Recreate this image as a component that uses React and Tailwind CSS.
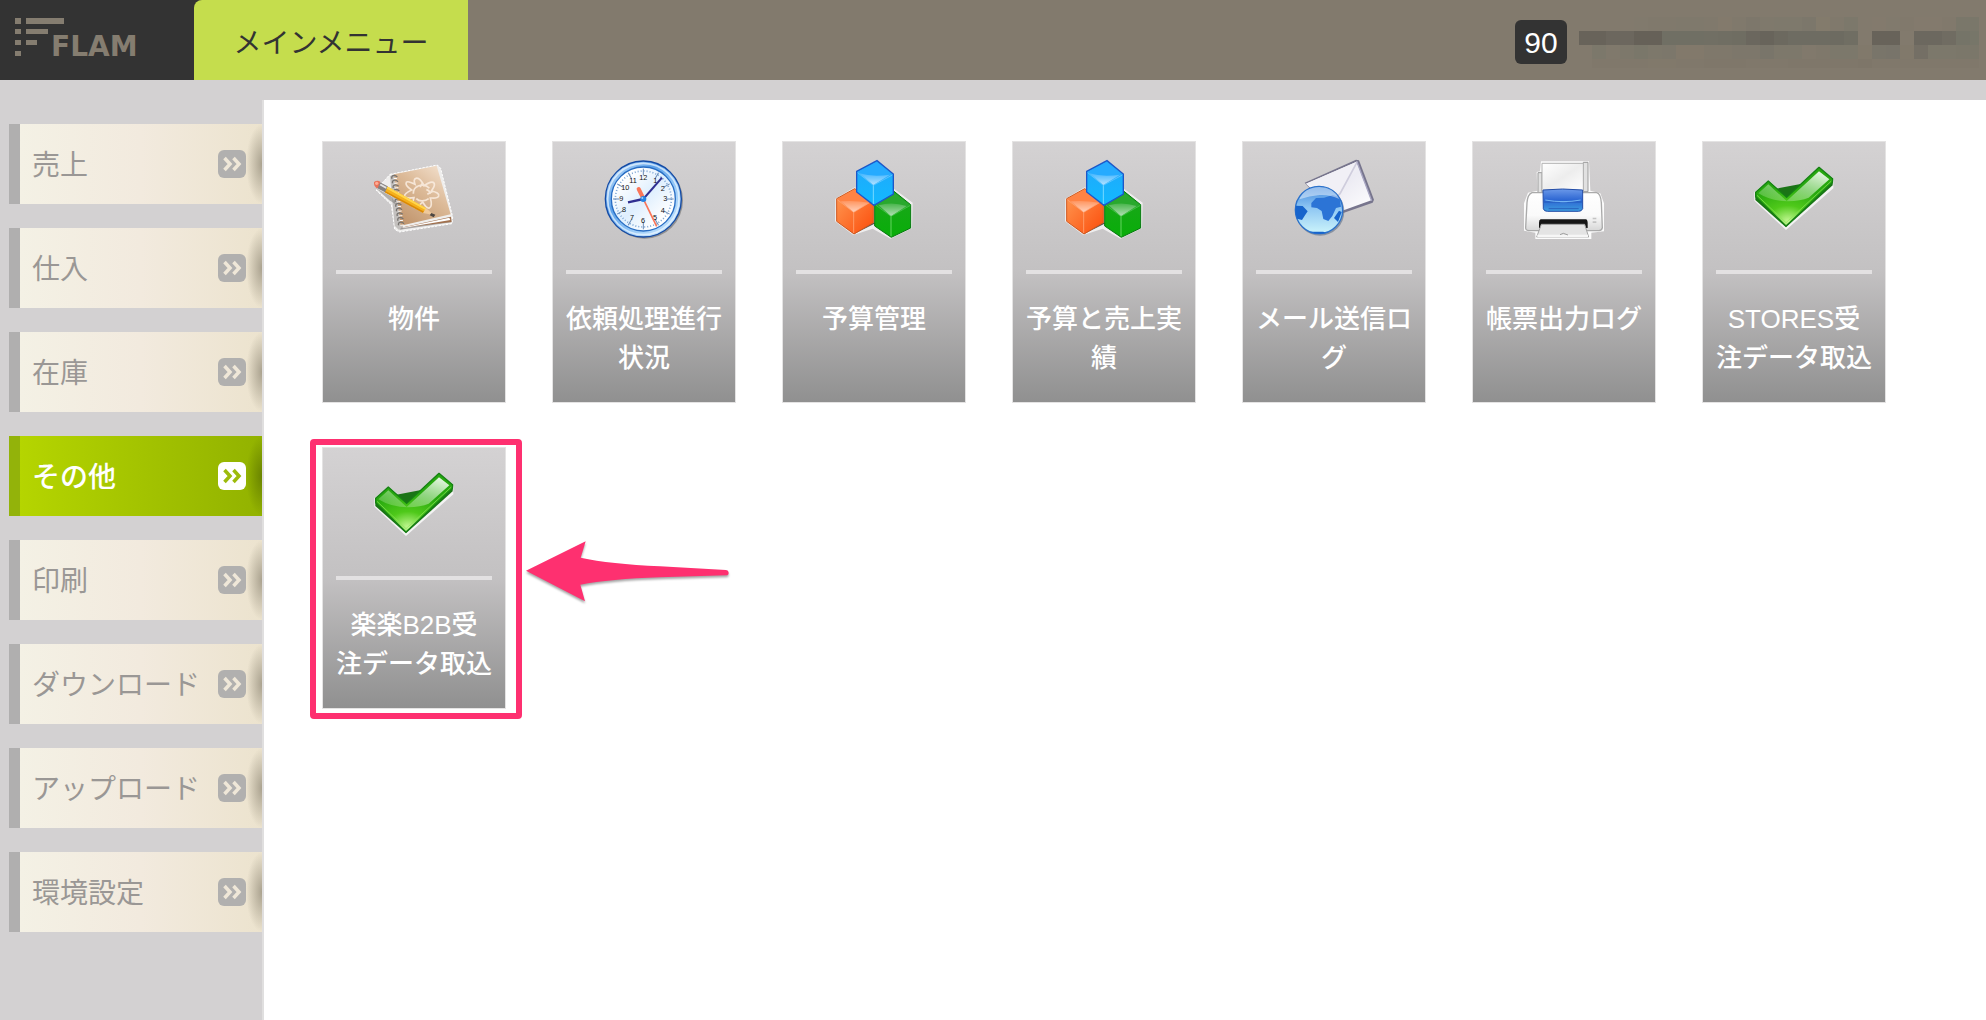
import { useState } from 'react';

const menuItems = ['売上', '仕入', '在庫', 'その他', '印刷', 'ダウンロード', 'アップロード', '環境設定'];

const nameRows = [
  { y: 1, h: 14, cells: ['#827a6d', '#827a6d', '#827a6d', '#827a6d', '#817a6d', '#80796c', '#80796c', '#7f796c', '#7f796c', '#80796c', '#837a6c', '#80796c', '#7d776b', '#7f796c', '#7e796c', '#7e796c', '#7c776b', '#837b6c', '#80796c', '#7c786b', '#827a6d', '#837a6d', '#817a6d', '#81796c', '#837a6d', '#837a6d', '#81796c', '#7a776a', '#7a776a'] },
  { y: 15, h: 14, cells: ['#68635a', '#68635a', '#6c675e', '#6c675e', '#666158', '#666158', '#706f64', '#706f64', '#706f64', '#716f64', '#706e63', '#6f6d62', '#6b675e', '#68645b', '#6c695f', '#6e6c62', '#6e6c62', '#6e6c62', '#6d6b61', '#706e63', '#827a6d', '#68635a', '#68635a', '#827a6d', '#6c685f', '#6c685f', '#706c62', '#757468', '#777669'] },
  { y: 29, h: 14, cells: ['#827a6d', '#7c786b', '#80796c', '#7d786b', '#7a776a', '#7d786b', '#7c776b', '#82796b', '#82796b', '#7f786b', '#7f786b', '#7d776b', '#7d776b', '#79756a', '#7d786b', '#7d786b', '#81796c', '#7f786b', '#7c786b', '#7c786b', '#81796b', '#79756a', '#78746a', '#81796b', '#746f65', '#7c786b', '#7c786b', '#7b776a', '#7b776a'] },
  { y: 43, h: 9, cells: ['#827a6d', '#80786b', '#80786b', '#80786b', '#80786b', '#81796b', '#81796b', '#80786b', '#80786b', '#7f776a', '#7f776a', '#7f776a', '#80786b', '#80786b', '#80786b', '#7f776a', '#7f776a', '#7f776a', '#7f776a', '#7f776a', '#7e7669', '#80786b', '#80786b', '#80786b', '#80786b', '#80786b', '#80786b', '#80786b', '#80786b'] },
];

function Logo() {
  return (
    <svg width="164" height="52" viewBox="0 0 164 52" fill="#857d70" role="img" aria-label="FLAM">
      <path d="M15 4h6v6h-6zM15 15h6v5h-6zM15 26h6v5h-6zM15 37h6v5h-6zM26 4h38v6H26zM26 15h22v5H26zM26 26h11v5H26z" />
      <text x="51" y="42" fontFamily="DejaVu Sans" fontSize="28" fontWeight="bold">FLAM</text>
    </svg>
  );
}

function UserName() {
  return (
    <svg width="400" height="52" viewBox="0 0 400 52" shapeRendering="crispEdges" aria-hidden="true">
      {nameRows.map((row) =>
        row.cells.map((color, i) => (
          <rect key={`${row.y}-${i}`} x={i * 14 - 1} y={row.y} width="14" height={row.h} fill={color} />
        ))
      )}
    </svg>
  );
}

function ArrowBadge({ active }) {
  return (
    <svg width="28" height="28" viewBox="0 0 28 28" className="relative" aria-hidden="true">
      <rect width="28" height="28" rx="6" fill={active ? '#ffffff' : '#b1b0af'} />
      <path
        d="M6.500 8l5.500 6-5.500 6M15.500 8l5.500 6-5.500 6"
        fill="none"
        stroke={active ? '#9dbb0c' : '#efe7d8'}
        strokeWidth="3.500"
      />
    </svg>
  );
}

function NotebookIcon() {
  const rings = [0, 1, 2, 3, 4, 5, 6, 7, 8, 9, 10];
  return (
    <svg width="80" height="80" viewBox="192 86 240 240" aria-hidden="true">
      <defs>
        <linearGradient id="cover" x1="1" y1="0" x2="0.3" y2="1">
          <stop offset="0" stopColor="#f6e6d6" />
          <stop offset="0.5" stopColor="#dcba98" />
          <stop offset="1" stopColor="#c2976f" />
        </linearGradient>
      </defs>
      <path d="M240 132l142-28 10 10 36 146-2 20-158 25-14-8-10-74-46-44z" fill="#efeeed" stroke="#fff" strokeWidth="3" strokeDasharray="7 4" />
      <path d="M240 138l14-6 26 164-14 2-12-12z" fill="#c3c0be" />
      <path d="M270 298l154-22-1-10-150 26z" fill="#8f8986" opacity="0.7" />
      <path d="M273 292l152-17-2-16z" fill="#a2714e" />
      <path d="M276 292l142-30 3 7-142 24z" fill="#fff" />
      <path d="M252 132l128-26 42 146-150 34z" fill="url(#cover)" />
      <g fill="none" stroke="#fbeee2" strokeWidth="5" opacity="0.85">
        <path d="M318 144c10-3 18 10 24 22 14-10 26-14 30-8 5 8-3 16-8 24 16 3 24 8 22 15-3 8-14 6-25 6 4 14 4 27-3 30-8 3-14-8-20-18-10 10-20 20-27 15-8-6-1-18 1-28-14 2-26 3-28-4-2-8 10-14 21-19-12-8-20-16-16-23 4-6 15 0 26 6-3-9-4-16 3-18z" />
        <path d="M316 172c16-13 35-8 42 2M310 190c0-14 8-20 14-22M356 205c-10 8-28 10-37 0M349 178c7 2 11 8 11 12" />
        <path d="M330 170l8-12M370 182l-18 10" />
      </g>
      {rings.map((i) => (
        <g key={i} fill="none" stroke="#77736f" strokeWidth="4">
          <path d={`M${262 + i * 2} ${140 + i * 14}c-8-8-20-4-16 5`} />
          <path d={`M${261 + i * 2} ${144 + i * 14}l-10 1`} stroke="#fff" strokeWidth="3" />
        </g>
      ))}
      <path d="M196 172l42 38 22 14-16-26z" fill="#7d7b79" opacity="0.55" />
      <path d="M231 168l118 66-9 14-116-62z" fill="#f5b01c" />
      <path d="M231 168l118 66-3 5-118-65z" fill="#ffd54c" />
      <path d="M226 182l117 62-3 4-116-62z" fill="#d98808" />
      <path d="M348 233l23 21-32-6z" fill="#efc99b" />
      <path d="M364 248l12 5-5 8-12-6z" fill="#4b4643" />
      <path d="M208 155l25 13-8 18-26-14z" fill="#85817f" />
      <path d="M212 160l18 10-2 5-19-10z" fill="#e3e2e1" />
      <path d="M192 155q10-7 19-1l-8 20q-12-4-11-19z" fill="#e9735a" />
      <circle cx="200" cy="159" r="5" fill="#ffab93" />
    </svg>
  );
}

const clockNumbers = [
  ['12', 310, 148], ['1', 346, 158], ['2', 368, 181], ['3', 376, 213], ['4', 368, 248], ['5', 345, 270],
  ['6', 309, 277], ['7', 276, 268], ['8', 252, 244], ['9', 244, 213], ['10', 256, 179], ['11', 279, 157],
];

function ClockIcon() {
  const ticks = [0, 30, 60, 90, 120, 150, 180, 210, 240, 270, 300, 330];
  return (
    <svg width="80" height="80" viewBox="192 86 240 240" aria-hidden="true">
      <defs>
        <linearGradient id="rim" x1="0" y1="0" x2="1" y2="1">
          <stop offset="0" stopColor="#ddf0ff" />
          <stop offset="0.35" stopColor="#5aa0ea" />
          <stop offset="0.65" stopColor="#9cccf8" />
          <stop offset="1" stopColor="#d5edff" />
        </linearGradient>
        <linearGradient id="face" x1="0" y1="0" x2="1" y2="1">
          <stop offset="0.2" stopColor="#fff" />
          <stop offset="0.5" stopColor="#dfeffe" />
          <stop offset="0.8" stopColor="#fff" />
        </linearGradient>
      </defs>
      <circle cx="314" cy="210" r="115" fill="#777" opacity="0.7" />
      <circle cx="310" cy="206" r="114" fill="url(#rim)" stroke="#144ba6" strokeWidth="4" />
      <circle cx="310" cy="206" r="107" fill="none" stroke="#eff8ff" strokeWidth="5" opacity="0.7" />
      <circle cx="310" cy="206" r="96" fill="url(#face)" stroke="#286dc3" strokeWidth="4" />
      <circle cx="310" cy="206" r="84" fill="none" stroke="#7ea6d4" strokeWidth="5" strokeDasharray="3 6" />
      {ticks.map((deg) => (
        <path key={deg} d="M310 115v20" stroke="#6a8bb5" strokeWidth="3" transform={`rotate(${deg} 310 206)`} />
      ))}
      {clockNumbers.map(([label, x, y]) => (
        <text key={label} x={x} y={y} textAnchor="middle" fontFamily="Liberation Sans" fontSize="22" fill="#111">
          {label}
        </text>
      ))}
      <path d="M296 176l14 28" stroke="#fa7659" strokeWidth="12" strokeLinecap="round" />
      <path d="M308 202l42 86" stroke="#fa7659" strokeWidth="5" />
      <path d="M310 206l56-64" stroke="#302f91" strokeWidth="6" />
      <path d="M310 206l-46 10" stroke="#302f91" strokeWidth="7" />
      <circle cx="310" cy="206" r="9" fill="#2583e2" />
      <circle cx="307" cy="203" r="3" fill="#9ed0ff" />
    </svg>
  );
}

function CubesIcon() {
  return (
    <svg width="80" height="80" viewBox="72 57 240 240" aria-hidden="true">
      <defs>
        <linearGradient id="orange" x1="0" y1="0" x2="1" y2="1">
          <stop offset="0" stopColor="#ff9c55" />
          <stop offset="1" stopColor="#fb4c0b" />
        </linearGradient>
        <linearGradient id="green" x1="0" y1="0" x2="0" y2="1">
          <stop offset="0" stopColor="#1da51d" />
          <stop offset="1" stopColor="#08ae08" />
        </linearGradient>
        <linearGradient id="blue" x1="0" y1="0" x2="0" y2="1">
          <stop offset="0" stopColor="#22a7fa" />
          <stop offset="1" stopColor="#12b9ff" />
        </linearGradient>
        <linearGradient id="shine" x1="0" y1="0" x2="0" y2="1">
          <stop offset="0" stopColor="#fff" stopOpacity="0.15" />
          <stop offset="1" stopColor="#fff" stopOpacity="0.65" />
        </linearGradient>
      </defs>
      <path d="M76 176l58-34 58 32 60-28 56 42-2 76-64 32-54-30-58 19-55-41z" fill="#efeeee" />
      <path d="M84 244l48 38 60-30 50 40 60-30v-10z" fill="#55504d" />
      <path d="M80 176l54-30 56 34v68l-58 34-52-38z" fill="url(#orange)" stroke="#cf5820" strokeWidth="3" />
      <path d="M82 178l51-29 54 32-56 36z" fill="#ff8344" />
      <path d="M92 184q40-4 86 4l-47 29z" fill="url(#shine)" />
      <path d="M131 217v62" stroke="#ff9a67" strokeWidth="3" />
      <path d="M131 217l57-35M131 217l-49-38" stroke="#ffab7e" strokeWidth="2" />
      <path d="M194 192l58-38 50 40v70l-58 28-50-34z" fill="url(#green)" stroke="#087a11" strokeWidth="3" />
      <path d="M197 193l54-36 49 38-57 34z" fill="#29a92d" />
      <path d="M206 196q40-12 84 2l-47 31z" fill="url(#shine)" />
      <path d="M243 229v60" stroke="#63d45f" strokeWidth="3" />
      <path d="M243 229l58-33M243 229l-46-34" stroke="#58c95b" strokeWidth="2" />
      <path d="M140 94l61-32 49 40v60l-58 34-52-40z" fill="url(#blue)" stroke="#1d57c9" strokeWidth="4" />
      <path d="M143 96l57-30 47 38-57 31z" fill="#26abff" />
      <path d="M148 100q40 12 92 4l-50 31z" fill="url(#shine)" />
      <path d="M190 136v56" stroke="#76d9ff" strokeWidth="3" />
      <path d="M190 136l57-31M190 136l-47-38" stroke="#74ccff" strokeWidth="2" />
    </svg>
  );
}

function MailIcon() {
  return (
    <svg width="80" height="80" viewBox="72 57 240 240" aria-hidden="true">
      <defs>
        <linearGradient id="paper" x1="0" y1="0" x2="1" y2="1">
          <stop offset="0" stopColor="#fff" />
          <stop offset="0.5" stopColor="#ecebf3" />
          <stop offset="1" stopColor="#fff" />
        </linearGradient>
        <linearGradient id="sea" x1="0" y1="0" x2="0" y2="1">
          <stop offset="0" stopColor="#3f86dc" />
          <stop offset="0.45" stopColor="#8ec6f3" />
          <stop offset="1" stopColor="#cdf5fb" />
        </linearGradient>
      </defs>
      <path d="M104 128l154-69 9 2 45 118-4 9-114 40z" fill="#77758d" />
      <path d="M108 131l152-66 44 116-106 38z" fill="url(#paper)" />
      <path d="M108 131l152-66-50 96z" fill="#f1f0f6" />
      <path d="M262 65l-52 96-12 12" fill="none" stroke="#cfcddd" strokeWidth="5" />
      <path d="M261 66l44 116" stroke="#a9a7c3" strokeWidth="4" />
      <circle cx="150" cy="214" r="73" fill="#66758c" opacity="0.65" />
      <circle cx="147" cy="210" r="71" fill="url(#sea)" stroke="#2c72cb" strokeWidth="4" />
      <path d="M124 189l14-15 24-1 26-8 20 6 5 29-15 4-11 24-12 15-15-6-5-24-14-9-17-2z" fill="#2c74d6" />
      <path d="M78 197l20 1 15 16-8 12-9 14-15-4q-8-20-3-39zM192 234l15-22 8 4-11 30zM120 275l40 0 8 4q-24 6-48-4z" fill="#1764cc" />
      <path d="M88 178q15-36 60-37 43 1 60 36-30-14-59-12-30 2-61 13z" fill="#fff" opacity="0.45" />
    </svg>
  );
}

function PrinterIcon() {
  return (
    <svg width="80" height="80" viewBox="72 57 240 240" aria-hidden="true">
      <defs>
        <linearGradient id="body" x1="0" y1="0" x2="0" y2="1">
          <stop offset="0" stopColor="#fff" />
          <stop offset="0.6" stopColor="#fafafa" />
          <stop offset="1" stopColor="#d7d7d7" />
        </linearGradient>
        <linearGradient id="window" x1="0" y1="0" x2="0" y2="1">
          <stop offset="0" stopColor="#6b99e9" />
          <stop offset="0.5" stopColor="#2c66d2" />
          <stop offset="1" stopColor="#3f9ddf" />
        </linearGradient>
        <linearGradient id="sheet" x1="0" y1="0" x2="1" y2="1">
          <stop offset="0" stopColor="#fff" />
          <stop offset="0.5" stopColor="#ededed" />
          <stop offset="1" stopColor="#fff" />
        </linearGradient>
      </defs>
      <path d="M110 96l10-2 3-30h144l4 88 30 8 11 30v84l-38 4v20H106v-20l-34-6v-82l12-32 28-6z" fill="#fbfbfb" />
      <path d="M114 98h12v60h-12zM250 67h14v88h-14z" fill="#e1e1e1" stroke="#9b9b9b" strokeWidth="3" />
      <path d="M126 70h124v84H126z" fill="url(#sheet)" stroke="#b2b2b2" strokeWidth="3" />
      <path d="M96 158h194q12 3 14 30l3 75q-1 8-10 9H86q-10-1-9-10l4-74q2-25 15-30z" fill="url(#body)" stroke="#aaa" strokeWidth="4" />
      <path d="M129 150q58-6 119 0v56q-3 8-12 8h-94q-10 0-12-8z" fill="url(#window)" stroke="#244da6" strokeWidth="3" />
      <path d="M132 186h114M146 206h90" stroke="#1f4fb0" strokeWidth="3" opacity="0.7" />
      <path d="M136 180q54 10 106 0M180 185h22" fill="none" stroke="#75b6f3" strokeWidth="3" />
      <path d="M122 238h136q6 2 5 17v9H117v-16q0-9 5-10z" fill="#161616" />
      <path d="M124 253h130l12 38H110z" fill="#e4e4e4" stroke="#a5a5a5" strokeWidth="3" />
      <path d="M112 284h152v8H112z" fill="#f6f6f6" />
      <path d="M180 284l10-4 14 5" fill="none" stroke="#9e9e9e" strokeWidth="3" />
      <path d="M278 233h11v5h-11zM278 244h11v5h-11z" fill="#c4c4c4" />
    </svg>
  );
}

function CheckIcon() {
  return (
    <svg width="80" height="80" viewBox="162 87 240 240" aria-hidden="true">
      <defs>
        <radialGradient id="leaf" cx="0.42" cy="0.92" r="0.6">
          <stop offset="0" stopColor="#c4f894" />
          <stop offset="0.45" stopColor="#4fc91a" />
          <stop offset="1" stopColor="#27a80f" />
        </radialGradient>
        <linearGradient id="gloss" x1="1" y1="0" x2="0.2" y2="1">
          <stop offset="0" stopColor="#fff" stopOpacity="0.95" />
          <stop offset="1" stopColor="#b2e8a0" stopOpacity="0.3" />
        </linearGradient>
      </defs>
      <path d="M163 186l43-35 54 46 96-86 44 34v30L258 300 163 212z" fill="#f3f3f3" />
      <path d="M166 188v22l92 82 140-126v-22z" fill="#1b7416" />
      <path d="M167 187l38-34 55 49 97-90 41 34-1 12-139 130-91-88z" fill="url(#leaf)" stroke="#168014" strokeWidth="4" strokeLinejoin="round" />
      <path d="M175 190l30-27 55 50 97-89 31 24-62 55q-24 10-62 11-50 0-89-24z" fill="url(#gloss)" />
      <path d="M171 196l87 82 136-125" fill="none" stroke="#8be45a" strokeWidth="3" opacity="0.7" />
    </svg>
  );
}

const tiles = [
  { id: 1, label: '物件', Icon: NotebookIcon },
  { id: 2, label: '依頼処理進行状況', Icon: ClockIcon },
  { id: 3, label: '予算管理', Icon: CubesIcon },
  { id: 4, label: '予算と売上実績', Icon: CubesIcon },
  { id: 5, label: 'メール送信ログ', Icon: MailIcon },
  { id: 6, label: '帳票出力ログ', Icon: PrinterIcon },
  { id: 7, label: 'STORES受注データ取込', Icon: CheckIcon },
  { id: 8, label: '楽楽B2B受\n注データ取込', Icon: CheckIcon, highlighted: true },
];

function Highlight() {
  return (
    <>
      <div className="pointer-events-none absolute -top-2 -right-4 -bottom-2.5 -left-3 rounded-sm border-6 border-[#fe3070]" />
      <svg
        className="pointer-events-none absolute top-[92px] left-[201px] drop-shadow-[0_2px_1px_rgba(0,0,0,0.35)]"
        width="210"
        height="67"
        viewBox="669 327 630 201"
        aria-hidden="true"
      >
        <path
          d="M678 422L857 334L842 383Q930 402 1080 409L1278 420Q1286 421 1286 428Q1286 436 1278 436L1080 442Q930 447 841 464L855 514Z"
          fill="#fe3070"
        />
      </svg>
    </>
  );
}

function Tile({ label, Icon, highlighted }) {
  return (
    <li className="relative w-[184px]">
      <button className="flex h-[262px] w-full cursor-pointer flex-col items-center border border-[#e4e3e3] bg-linear-to-b from-[#d4d2d3] via-[#c3c1c2] via-50% to-[#909090] pt-[17px]">
        <Icon />
        <span className="mt-[31px] h-1 w-[156px] bg-[#e3e1e2]" />
        <span className="mt-[26px] w-[156px] text-[26px] leading-[39px] font-medium break-all whitespace-pre-line text-white">
          {label}
        </span>
      </button>
      {highlighted && <Highlight />}
    </li>
  );
}

export default function App() {
  const [selected, setSelected] = useState('その他');

  return (
    <div className="flex min-h-screen flex-col bg-[#d3d1d2] font-['Liberation_Sans','Noto_Sans_CJK_JP',sans-serif]">
      {/* Header */}
      <header className="flex h-20 bg-[#827a6d]">
        <div className="flex bg-[#333333]">
          <a href="#home" className="w-[194px] pt-[14px]">
            <Logo />
          </a>
          <a
            href="#menu"
            className="flex w-[274px] items-center justify-center rounded-tl-lg bg-[#c5dd4d] pt-2 text-[28px] text-[#333333]"
          >
            メインメニュー
          </a>
        </div>
        <div className="ml-auto flex items-center gap-3 pt-1 pr-[7px]">
          <span className="flex h-11 w-[52px] items-center justify-center rounded-md bg-[#333333] text-[30px] text-white">
            90
          </span>
          <UserName />
        </div>
      </header>

      <div className="flex flex-1 pt-5">
        {/* Sidebar */}
        <nav className="w-[264px] shrink-0 border-r-2 border-[#e0dfdf] pt-6 pl-[9px]">
          <ul className="flex flex-col gap-6">
            {menuItems.map((item) => {
              const active = item === selected;
              return (
                <li key={item}>
                  <a
                    href="#menu"
                    onClick={() => setSelected(item)}
                    className={`relative flex h-20 items-center justify-between border-l-11 pr-4 pl-3 text-[28px] ${
                      active
                        ? 'border-[#93b30a] bg-linear-to-r from-[#b5d500] to-[#92b200] font-medium text-white'
                        : 'border-[#b0afaf] bg-linear-to-r from-[#f4f1e5] via-[#f2eade] to-[#ece3ce] text-[#9a9795]'
                    }`}
                  >
                    <span
                      className={`absolute inset-y-0 right-0 w-4 ${
                        active
                          ? 'bg-[radial-gradient(farthest-side_at_right,#6a8400,transparent)]'
                          : 'bg-[radial-gradient(farthest-side_at_right,#aaa28f,transparent)]'
                      }`}
                    />
                    <span className="pt-1">{item}</span>
                    <ArrowBadge active={active} />
                  </a>
                </li>
              );
            })}
          </ul>
        </nav>

        {/* Tiles */}
        <main className="flex-1 bg-white pt-[41px] pl-[58px]">
          <ul className="flex flex-wrap gap-x-[46px] gap-y-11">
            {tiles.map((tile) => (
              <Tile key={tile.id} {...tile} />
            ))}
          </ul>
        </main>
      </div>
    </div>
  );
}
